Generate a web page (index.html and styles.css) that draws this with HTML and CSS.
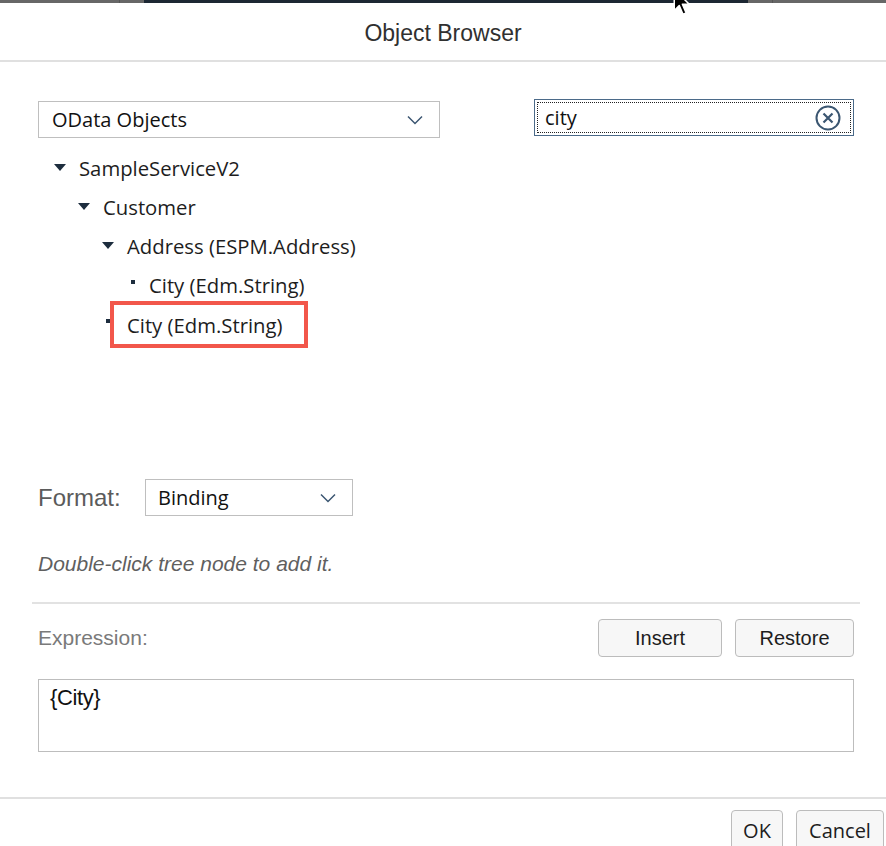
FILE: index.html
```html
<!DOCTYPE html>
<html>
<head>
<meta charset="utf-8">
<link rel="stylesheet" href="styles.css">
</head>
<body>
<div class="topstrip">
  <div class="ts-side ts-left"><span class="ts-sep"></span></div>
  <div class="ts-mid"></div>
  <div class="ts-side ts-right"><span class="ts-sep"></span></div>
  <svg class="cursor" width="20" height="30" viewBox="0 0 16 24"><path d="M1 1 L1 18 L5 14 L8 21 L10.5 20 L7.5 13 L13 13 Z" fill="#000" stroke="#fff" stroke-width="1.2" stroke-linejoin="round"/></svg>
</div>
<header class="dlg-header">Object Browser</header>
<main class="dlg-body">
  <div class="row-top">
    <div class="select select-wide">
      <span>OData Objects</span>
      <svg class="chev" width="16" height="10" viewBox="0 0 16 10"><path d="M1 1.5 L8 8.5 L15 1.5" fill="none" stroke="#3b5671" stroke-width="1.5"/></svg>
    </div>
    <div class="search">
      <span>city</span>
      <svg class="clear" width="28" height="28" viewBox="0 0 28 28"><circle cx="14" cy="14" r="11.5" fill="none" stroke="#3b5671" stroke-width="2"/><path d="M9.5 9.5 L18.5 18.5 M18.5 9.5 L9.5 18.5" stroke="#3b5671" stroke-width="2.2"/></svg>
    </div>
  </div>
  <ul class="tree">
    <li class="node lvl0"><span class="tri"></span><span class="lbl">SampleServiceV2</span></li>
    <li class="node lvl1"><span class="tri"></span><span class="lbl">Customer</span></li>
    <li class="node lvl2"><span class="tri"></span><span class="lbl">Address (ESPM.Address)</span></li>
    <li class="node lvl3 leaf"><span class="dot"></span><span class="lbl">City (Edm.String)</span></li>
    <li class="node lvl2 leaf sel"><span class="dot"></span><span class="lbl">City (Edm.String)</span></li>
  </ul>
  <div class="format-row">
    <span class="label-lg">Format:</span>
    <div class="select select-small">
      <span>Binding</span>
      <svg class="chev" width="16" height="10" viewBox="0 0 16 10"><path d="M1 1.5 L8 8.5 L15 1.5" fill="none" stroke="#3b5671" stroke-width="1.5"/></svg>
    </div>
  </div>
  <p class="hint">Double-click tree node to add it.</p>
  <hr class="sep">
  <div class="expr-row">
    <span class="label-sm">Expression:</span>
    <div class="btns">
      <button class="btn btn-insert">Insert</button>
      <button class="btn btn-restore">Restore</button>
    </div>
  </div>
  <div class="textarea">{City}</div>
</main>
<footer class="dlg-footer">
  <button class="btn btn-ok">OK</button>
  <button class="btn btn-cancel">Cancel</button>
</footer>
</body>
</html>
```
FILE: styles.css
```css
* { box-sizing: border-box; }
html, body { margin: 0; padding: 0; background: #fff; }
body { width: 886px; height: 846px; overflow: hidden; font-family: "Open Sans", "Noto Sans", sans-serif; color: #1d1d1d; }

.topstrip { position: relative; display: flex; height: 3px; z-index: 5; }
.ts-side { background: #676767; position: relative; }
.ts-left { width: 144px; }
.ts-right { flex: 1; }
.ts-mid { width: 604px; background: #1c2733; }
.ts-sep { position: absolute; top: 0; width: 1px; height: 3px; background: #555; }
.ts-left .ts-sep { left: 119px; }
.ts-right .ts-sep { left: 24px; }
.cursor { position: absolute; left: 673px; top: -12px; }

.dlg-header {
  height: 59px;
  border-bottom: 2px solid #e0e0e0;
  display: flex; align-items: center; justify-content: center;
  font-family: "Liberation Sans", Arial, sans-serif;
  font-size: 23px; color: #303030;
  padding-top: 4px;
}

.dlg-body { padding: 0 32px 0 32px; }

.row-top { display: flex; justify-content: space-between; align-items: flex-start; padding: 37px 0 0 6px; }
.select {
  display: flex; align-items: center; justify-content: space-between;
  border: 1px solid #bfbfbf; background: #fff;
  height: 37px; font-size: 20px; color: #111;
}
.select-wide { width: 402px; padding: 0 16px 0 13px; margin-top: 2px; }
.select-small { width: 208px; padding: 0 16px 0 12px; }
.search {
  width: 320px; height: 37px;
  border: 1px solid #4b6a89;
  outline: 1px dotted #222; outline-offset: -4px;
  display: flex; align-items: center; justify-content: space-between;
  padding: 0 11px 0 10px; font-size: 20px; color: #111;
}

.tree { list-style: none; margin: 0; padding: 10px 0 0 0; height: 341px; }
.node { height: 39px; display: flex; align-items: center; font-size: 20.3px; color: #1d1d1d; position: relative; }
.lvl0 { padding-left: 22px; }
.lvl1 { padding-left: 46px; }
.lvl2 { padding-left: 70px; }
.lvl3 { padding-left: 94px; }
.tri { width: 0; height: 0; border-left: 6px solid transparent; border-right: 6px solid transparent; border-top: 7px solid #1d2d3e; margin-right: 13px; }
.dot { width: 4px; height: 4px; background: #1d2d3e; margin: 0 14px 0 4px; }
.lvl2.leaf .dot { margin: 0 16px 6px 4px; }
.lvl3.leaf .dot { margin: 0 14px 6px 5px; }
.sel .lbl { outline: 4px solid #f2574b; padding: 6px 21px 5px 13px; margin-left: -12px; margin-top: 2px; }

.format-row { display: flex; align-items: center; padding-left: 6px; }
.label-lg { font-family: "Liberation Sans", Arial, sans-serif; font-size: 24px; color: #5b5b5b; width: 107px; }
.hint { margin: 36px 0 0 6px; font-family: "Liberation Sans", Arial, sans-serif; font-style: italic; font-size: 21px; color: #5f5f5f; }
.sep { border: 0; border-top: 2px solid #e2e2e2; margin: 26px -6px 0 0; }

.expr-row { display: flex; justify-content: space-between; align-items: center; padding-left: 6px; margin-top: 15px; }
.label-sm { font-family: "Liberation Sans", Arial, sans-serif; font-size: 21px; color: #7a7a7a; }
.btns { display: flex; gap: 13px; }
.btn {
  font-family: "Liberation Sans", Arial, sans-serif;
  font-size: 20px; color: #1d1d1d;
  background: #f7f7f7; border: 1px solid #bcbcbc; border-radius: 4px;
  height: 38px; padding: 0;
}
.btn-insert { width: 124px; }
.btn-restore { width: 119px; }

.textarea {
  margin: 22px 0 0 6px; height: 73px;
  border: 1px solid #bdbdbd;
  padding: 5px 11px;
  font-family: "Liberation Sans", Arial, sans-serif; font-size: 22px; color: #111;
  letter-spacing: -0.4px;
}

.dlg-footer {
  margin-top: 45px;
  border-top: 2px solid #e0e0e0;
  display: flex; justify-content: flex-end; gap: 13px;
  padding: 11px 2px 0 0;
}
.btn-ok { width: 52px; height: 40px; font-family: "Open Sans", sans-serif; }
.btn-cancel { width: 88px; height: 40px; font-family: "Open Sans", sans-serif; }
```
